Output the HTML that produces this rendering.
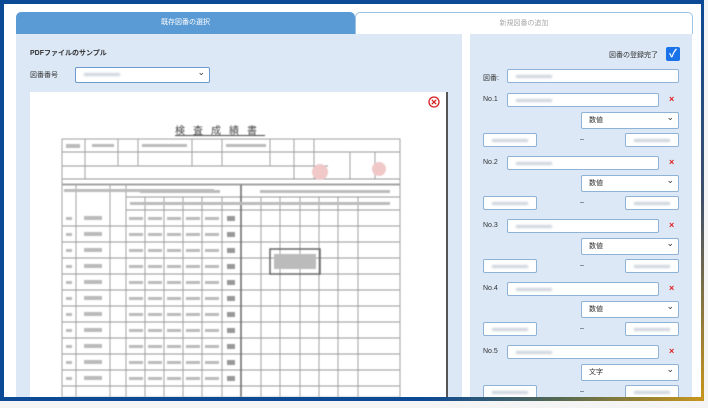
<!DOCTYPE html>
<html><head><meta charset="utf-8"><style>
*{box-sizing:border-box;margin:0;padding:0}
body{width:708px;height:408px;background:#f4f4f4;position:relative;overflow:hidden;font-family:"Liberation Sans","Noto Sans CJK JP",sans-serif;color:#333}
.frame{position:absolute;left:0;top:0;width:704px;height:401px;background:#fff}
.bottom{position:absolute;left:0;top:397px;width:704px;height:4px;background:linear-gradient(90deg,#0c4a96 0%,#0c4a96 60%,#586a50 80%,#c8961c 100%)}
.right{position:absolute;left:701px;top:0;width:3px;height:401px;background:linear-gradient(180deg,#0c4a96 0%,#40506a 50%,#c8961c 100%)}
.tab1{position:absolute;left:16px;top:12px;width:339px;height:22px;background:#5b9bd5;border-radius:5px 5px 0 0;color:#fff;font-size:7px;text-align:center;line-height:22px}
.tab2{position:absolute;left:355px;top:12px;width:338px;height:22px;background:#fff;border:1px solid #9cc2e5;border-bottom:none;border-radius:5px 5px 0 0;color:#aaa;font-size:7px;text-align:center;line-height:21px}
.lp{position:absolute;left:16px;top:34px;width:446px;height:363px;background:#dce8f6}
.rp{position:absolute;left:470px;top:34px;width:222px;height:363px;background:#dce8f6}
.gap{position:absolute;left:462px;top:34px;width:8px;height:363px;background:#fff}
.t{position:absolute;font-size:7px;color:#333;white-space:nowrap}
.in{position:absolute;background:#fff;border:1px solid #8fb3d6;border-radius:2px;height:14px}
.in::after{content:"";position:absolute;left:8px;top:5px;width:36px;height:3px;background:#ccd3dc;filter:blur(1px)}
.sel{position:absolute;background:#fff;border:1px solid #8fb3d6;border-radius:2px;height:17px;font-size:7px;line-height:15px;padding-left:7px}
.sel::after{content:"⌄";position:absolute;right:4px;top:-3px;font-size:9px}
.x{position:absolute;color:#e02020;font-size:9px;font-weight:bold}
.pdf{position:absolute;left:30px;top:92px;width:418px;height:305px;background:#fff;border-right:2px solid #555}
</style></head><body>
<div class="frame"></div>
<div class="tab1">既存図番の選択</div>
<div class="tab2">新規図番の追加</div>
<div class="lp"></div><div class="gap"></div><div class="rp"></div>
<div class="t" style="left:30px;top:48px;font-weight:bold;font-size:7px">PDFファイルのサンプル</div>
<div class="t" style="left:30px;top:70px">図番番号</div>
<div class="sel" style="left:75px;top:67px;width:135px;height:16px;border-color:#6a9bd0"></div>
<div class="in" style="left:76px;top:68px;width:100px;border:none;background:transparent"></div>
<div class="pdf">
<svg style="position:absolute;left:398px;top:4px" width="12" height="12" viewBox="0 0 12 12"><circle cx="6" cy="6" r="5" fill="none" stroke="#d42020" stroke-width="1.3"/><path d="M3.8 3.8L8.2 8.2M8.2 3.8L3.8 8.2" stroke="#d42020" stroke-width="1.3"/></svg>
<div class="t" style="left:145px;top:30px;font-size:10px;letter-spacing:8px;color:#444;text-decoration:underline;filter:blur(0.4px)">検査成績書</div>
<svg style="position:absolute;left:0;top:0;filter:blur(0.5px)" width="418" height="305">
<g stroke="#999" stroke-width="0.9" fill="none">
<rect x="32" y="47" width="338" height="45"/>
<line x1="32" y1="60" x2="370" y2="60"/><line x1="32" y1="74" x2="298" y2="74"/>
<line x1="55" y1="47" x2="55" y2="87"/><line x1="88" y1="47" x2="88" y2="74"/><line x1="108" y1="47" x2="108" y2="74"/>
<line x1="162" y1="47" x2="162" y2="74"/><line x1="192" y1="47" x2="192" y2="74"/><line x1="240" y1="47" x2="240" y2="74"/>
<line x1="264" y1="47" x2="264" y2="87"/><line x1="284" y1="47" x2="284" y2="87"/><line x1="320" y1="60" x2="320" y2="87"/><line x1="345" y1="60" x2="345" y2="87"/>
<line x1="32" y1="87" x2="370" y2="87"/>
<rect x="32" y="93" width="338" height="212"/>
<line x1="46" y1="93" x2="46" y2="305"/><line x1="80" y1="93" x2="80" y2="305"/><line x1="96" y1="93" x2="96" y2="305"/>
<line x1="115" y1="105" x2="115" y2="305"/><line x1="134" y1="105" x2="134" y2="305"/><line x1="153" y1="105" x2="153" y2="305"/><line x1="172" y1="105" x2="172" y2="305"/><line x1="192" y1="105" x2="192" y2="305"/>
<line x1="231" y1="105" x2="231" y2="305"/><line x1="250" y1="105" x2="250" y2="305"/><line x1="270" y1="105" x2="270" y2="305"/><line x1="289" y1="105" x2="289" y2="305"/><line x1="308" y1="105" x2="308" y2="305"/><line x1="328" y1="105" x2="328" y2="305"/>
<line x1="96" y1="105" x2="370" y2="105"/><line x1="96" y1="118" x2="370" y2="118"/>
<line x1="32" y1="134" x2="370" y2="134"/><line x1="32" y1="150" x2="370" y2="150"/><line x1="32" y1="166" x2="370" y2="166"/><line x1="32" y1="182" x2="370" y2="182"/><line x1="32" y1="198" x2="370" y2="198"/><line x1="32" y1="214" x2="370" y2="214"/><line x1="32" y1="230" x2="370" y2="230"/><line x1="32" y1="246" x2="370" y2="246"/><line x1="32" y1="262" x2="370" y2="262"/><line x1="32" y1="278" x2="370" y2="278"/><line x1="32" y1="294" x2="370" y2="294"/>
</g>
<line x1="211" y1="93" x2="211" y2="305" stroke="#666" stroke-width="1.5"/>
<rect x="240" y="157" width="50" height="25" fill="none" stroke="#666" stroke-width="1.5"/>
<rect x="244" y="162" width="42" height="15" fill="#bbb"/>
<circle cx="290" cy="80" r="8" fill="#f0c8c8"/><circle cx="349" cy="77" r="7" fill="#f0c8c8"/>
<g fill="#bbb"><rect x="36" y="52" width="14" height="4"/><rect x="62" y="52" width="22" height="3"/><rect x="112" y="52" width="45" height="3"/><rect x="196" y="52" width="40" height="3"/>
<rect x="34" y="97" width="150" height="3"/>
<rect x="110" y="98" width="80" height="3"/><rect x="230" y="98" width="130" height="3"/><rect x="100" y="110" width="260" height="3"/>
<g id="r"><rect x="36" y="125" width="6" height="3"/><rect x="54" y="124" width="18" height="4"/><rect x="99" y="125" width="14" height="3"/><rect x="118" y="125" width="14" height="3"/><rect x="137" y="125" width="14" height="3"/><rect x="156" y="125" width="14" height="3"/><rect x="175" y="125" width="14" height="3"/><rect x="197" y="124" width="8" height="5" fill="#999"/></g>
<use href="#r" y="16"/><use href="#r" y="32"/><use href="#r" y="48"/><use href="#r" y="64"/><use href="#r" y="80"/><use href="#r" y="96"/><use href="#r" y="112"/><use href="#r" y="128"/><use href="#r" y="144"/><use href="#r" y="160"/></g>
</svg>
</div>
<div class="t" style="left:609px;top:50px">図番の登録完了</div>
<div style="position:absolute;left:666px;top:47px;width:14px;height:14px;background:#1a73e8;border-radius:2px;color:#fff;font-size:11px;line-height:14px;text-align:center;font-weight:bold">✓</div>
<div class="t" style="left:483px;top:73px">図番:</div>
<div class="in" style="left:507px;top:69px;width:172px"></div>
<div class="t" style="left:483px;top:96px">No.1</div><div class="in" style="left:507px;top:93px;width:152px"></div><div class="x" style="left:669px;top:94px">×</div>
<div class="sel" style="left:581px;top:112px;width:98px">数値</div>
<div class="in" style="left:483px;top:133px;width:54px"></div><div class="t" style="left:580px;top:136px">–</div><div class="in" style="left:625px;top:133px;width:54px"></div>
<div class="t" style="left:483px;top:159px">No.2</div><div class="in" style="left:507px;top:156px;width:152px"></div><div class="x" style="left:669px;top:157px">×</div>
<div class="sel" style="left:581px;top:175px;width:98px">数値</div>
<div class="in" style="left:483px;top:196px;width:54px"></div><div class="t" style="left:580px;top:199px">–</div><div class="in" style="left:625px;top:196px;width:54px"></div>
<div class="t" style="left:483px;top:222px">No.3</div><div class="in" style="left:507px;top:219px;width:152px"></div><div class="x" style="left:669px;top:220px">×</div>
<div class="sel" style="left:581px;top:238px;width:98px">数値</div>
<div class="in" style="left:483px;top:259px;width:54px"></div><div class="t" style="left:580px;top:262px">–</div><div class="in" style="left:625px;top:259px;width:54px"></div>
<div class="t" style="left:483px;top:285px">No.4</div><div class="in" style="left:507px;top:282px;width:152px"></div><div class="x" style="left:669px;top:283px">×</div>
<div class="sel" style="left:581px;top:301px;width:98px">数値</div>
<div class="in" style="left:483px;top:322px;width:54px"></div><div class="t" style="left:580px;top:325px">–</div><div class="in" style="left:625px;top:322px;width:54px"></div>
<div class="t" style="left:483px;top:348px">No.5</div><div class="in" style="left:507px;top:345px;width:152px"></div><div class="x" style="left:669px;top:346px">×</div>
<div class="sel" style="left:581px;top:364px;width:98px">文字</div>
<div class="in" style="left:483px;top:385px;width:54px"></div><div class="t" style="left:580px;top:388px">–</div><div class="in" style="left:625px;top:385px;width:54px"></div>
<div class="bottom"></div><div class="right"></div>
<div style="position:absolute;left:0;top:0;width:4px;height:401px;background:#0c4a96"></div>
<div style="position:absolute;left:0;top:0;width:704px;height:4px;background:#0c4a96"></div>
</body></html>
